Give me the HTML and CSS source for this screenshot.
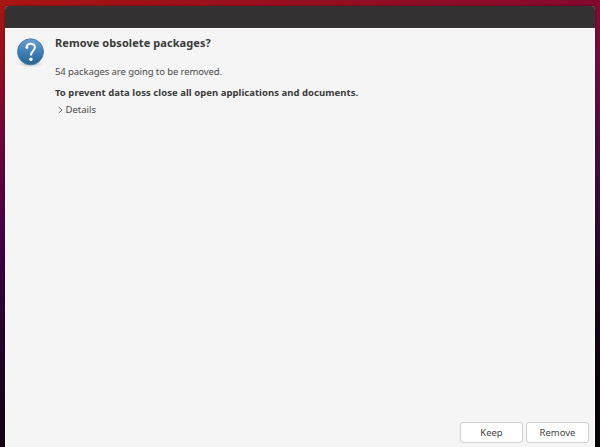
FILE: index.html
```
<!DOCTYPE html>
<html lang="en">
<head>
<meta charset="utf-8">
<title>Remove obsolete packages?</title>
<link rel="stylesheet" href="styles.css">
</head>
<body>
<main class="window">
  <header class="titlebar"></header>
  <section class="content">
    <svg class="question" viewBox="0 0 30 32" aria-hidden="true">
      <defs>
        <linearGradient id="ball" x1="0" y1="0" x2="0" y2="1">
          <stop offset="0" stop-color="#6f9fd0"/>
          <stop offset=".5" stop-color="#3e80b8"/>
          <stop offset="1" stop-color="#286391"/>
        </linearGradient>
        <radialGradient id="shade"><stop offset="0" stop-color="#8d9499" stop-opacity=".6"/><stop offset="1" stop-color="#8d9499" stop-opacity="0"/></radialGradient>
      </defs>
      <ellipse cx="14.5" cy="28" rx="13" ry="3.2" fill="url(#shade)"/>
      <circle cx="14.5" cy="15.8" r="13" fill="url(#ball)" stroke="#3874a8" stroke-width=".8"/>
      <path d="M10.6 11.5C10.8 6.6 18.9 6.6 18.9 11.3C18.9 14.9 14.9 15.2 14.9 19.4" fill="none" stroke="#fff" stroke-width="2"/>
      <circle cx="10.9" cy="11.5" r="1.4" fill="#fff"/>
      <circle cx="14.9" cy="23.2" r="1.7" fill="#fff"/>
    </svg>
    <div class="message">
      <h1 class="heading">Remove obsolete packages?</h1>
      <p class="summary">54 packages are going to be removed.</p>
      <p class="warning">To prevent data loss close all open applications and documents.</p>
      <div class="details">
        <svg class="chevron" viewBox="0 0 5 8" aria-hidden="true"><path d="M.8 1L4 4L.8 7" fill="none" stroke="#555" stroke-width=".9"/></svg>
        <span>Details</span>
      </div>
    </div>
  </section>
  <footer class="actions">
    <button class="button keep">Keep</button>
    <button class="button remove">Remove</button>
  </footer>
</main>
</body>
</html>
```
FILE: styles.css
```
* { box-sizing: border-box; }
body {
  margin: 0;
  height: 447px;
  padding: 6px 5px 0;
  overflow: hidden;
  font-family: "Noto Sans", sans-serif;
  font-size: 9.5px;
  color: #4a4a4a;
  background:
    linear-gradient(90deg, #a81512, #960f20 50%, #85092f) 0 0 / 100% 7px no-repeat,
    linear-gradient(#a81512, #98101c 12%, #700638 30%, #430048 53%, #26042f 75%, #120410 100%) 0 0 / 50% 100% no-repeat,
    linear-gradient(#85092f, #780b3c 10%, #4b0b45 32%, #240728 60%, #0c040a 85%, #080306 100%) 100% 0 / 50% 100% no-repeat;
}
.window {
  height: 441px;
  display: flex;
  flex-direction: column;
  background: #f5f5f5;
  border-radius: 4px 4px 0 0;
  box-shadow: 0 0 2px rgba(0, 0, 0, .55);
}
.titlebar {
  height: 22px;
  background: #333132;
  border-radius: 4px 4px 0 0;
}
.content {
  flex: 1;
  display: flex;
  align-items: flex-start;
  padding: 7px 10px 0;
  border: 1px solid #fff;
  border-bottom: 0;
}
.question { width: 30px; height: 32px; }
.message { margin-left: 9px; white-space: nowrap; }
.heading, .summary, .warning { margin: 0; }
.heading { font-size: 11px; line-height: 14px; letter-spacing: .07px; color: #3a3a3a; }
.summary { margin-top: 15px; line-height: 14px; letter-spacing: -.09px; }
.warning { margin-top: 7px; line-height: 14px; font-weight: 700; letter-spacing: .045px; color: #3a3a3a; }
.details { display: flex; align-items: center; gap: 2.5px; padding-left: 3px; margin-top: 3px; line-height: 14px; }
.chevron { width: 5px; height: 8px; }
.actions {
  display: flex;
  justify-content: flex-end;
  gap: 3px;
  padding: 0 5px 4px;
  border: solid #fff;
  border-width: 0 1px;
}
.button {
  width: 63px;
  height: 21px;
  padding: 0;
  font: inherit;
  color: #454545;
  background: #fefefe;
  border: 1px solid #d0d0d0;
  border-radius: 3px;
}
```
